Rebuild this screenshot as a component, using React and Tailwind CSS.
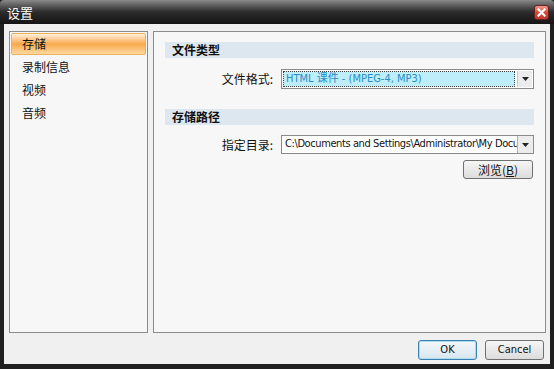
export default function App() {
  const cjk = { fontFamily: '"Noto Sans CJK SC", "Liberation Sans", sans-serif' };
  const Arrow = () => (
    <svg width="7" height="4" viewBox="0 0 7 4"><path d="M0 0h7L3.5 4z" fill="#222" /></svg>
  );
  const latin = { fontFamily: '"DejaVu Sans Condensed", "DejaVu Sans", "Noto Sans CJK SC", sans-serif' };
  return (
    <div className="w-[554px] h-[369px] bg-[#202020] flex flex-col overflow-hidden text-[12px] text-[#111]" style={cjk}>
      <div className="h-[24px] shrink-0 flex items-center justify-between pl-[7px] pr-[5px] bg-gradient-to-b from-[#8a8a8a] via-[#2c2c2c] to-[#151515] rounded-t-[4px]">
        <span className="text-white text-[13px] leading-none">设置</span>
        <div className="w-[15px] h-[15px] rounded-[3px] border border-[#6a2020] bg-gradient-to-b from-[#f09a8a] via-[#d84a3a] to-[#c03a2a] flex items-center justify-center">
          <svg width="9" height="9" viewBox="0 0 9 9"><path d="M1.5 1.5l6 6M7.5 1.5l-6 6" stroke="#fff" strokeWidth="2.2" strokeLinecap="square" /></svg>
        </div>
      </div>
      <div className="flex-1 mx-[4px] mb-[5px] bg-[#f0f0f0] flex flex-col">
        <div className="flex gap-[5px] pl-[5px] pr-[3px] pt-[7px]">
          <div className="w-[139px] h-[302px] border border-[#8c8c8c] bg-[#f7f7f7] p-[1px] flex flex-col">
            <div className="h-[22px] rounded-[2px] border border-[#e9b060] bg-gradient-to-b from-[#fff0d8] via-[#f9a84a] to-[#fcd9a0] flex items-center pl-[10px]">存储</div>
            <div className="h-[23px] flex items-center pl-[11px]">录制信息</div>
            <div className="h-[23px] flex items-center pl-[11px]">视频</div>
            <div className="h-[23px] flex items-center pl-[11px]">音频</div>
          </div>
          <div className="w-[393px] h-[302px] border border-[#8c8c8c] bg-[#f7f7f7] pt-[10px] px-[11px] flex flex-col">
            <div className="h-[16px] bg-[#dde7ef] flex items-center pl-[7px] font-bold">文件类型</div>
            <div className="flex items-center mt-[11px] h-[20px]">
              <div className="w-[108px] text-right">文件格式:</div>
              <div className="ml-[8px] w-[253px] h-[20px] border border-[#8a8a8a] bg-white flex items-stretch p-[1px]">
                <div className="flex-1 bg-[#bdeefa] border border-dotted border-[#444] flex items-center pl-[2px] text-[#2a8cc4] text-[11px]" style={latin}>HTML 课件 - (MPEG-4, MP3)</div>
                <div className="w-[15px] ml-[2px] bg-[#ececec] border-l border-[#c8c8c8] flex items-center justify-center"><Arrow /></div>
              </div>
            </div>
            <div className="h-[16px] mt-[20px] bg-[#dde7ef] flex items-center pl-[7px] font-bold">存储路径</div>
            <div className="flex items-center mt-[10px] h-[19px]">
              <div className="w-[108px] text-right">指定目录:</div>
              <div className="ml-[8px] w-[253px] h-[19px] border border-[#8a8a8a] bg-white flex items-stretch">
                <div className="flex-1 overflow-hidden whitespace-nowrap flex items-center pl-[3px] text-[11px] tracking-[-0.4px]" style={latin}>C:\Documents and Settings\Administrator\My Docum</div>
                <div className="w-[16px] bg-[#ececec] border-l border-[#b0b0b0] flex items-center justify-center"><Arrow /></div>
              </div>
            </div>
            <div className="flex justify-end mt-[6px] pr-[1px]">
              <div className="w-[70px] h-[19px] rounded-[3px] border border-[#707070] bg-gradient-to-b from-[#f6f6f6] to-[#dcdcdc] flex items-center justify-center">浏览(<span className="underline">B</span>)</div>
            </div>
          </div>
        </div>
        <div className="flex justify-end gap-[8px] pr-[6px] mt-[7px]">
          <div className="w-[59px] h-[20px] rounded-[3px] border border-[#3c7fb1] bg-gradient-to-b from-[#f4f8fb] to-[#d8e6ef] shadow-[inset_0_0_0_1px_#a8dcf0] flex items-center justify-center text-[11px]" style={latin}>OK</div>
          <div className="w-[59px] h-[20px] rounded-[3px] border border-[#707070] bg-gradient-to-b from-[#f6f6f6] to-[#dcdcdc] flex items-center justify-center text-[11px]" style={latin}>Cancel</div>
        </div>
      </div>
    </div>
  );
}
